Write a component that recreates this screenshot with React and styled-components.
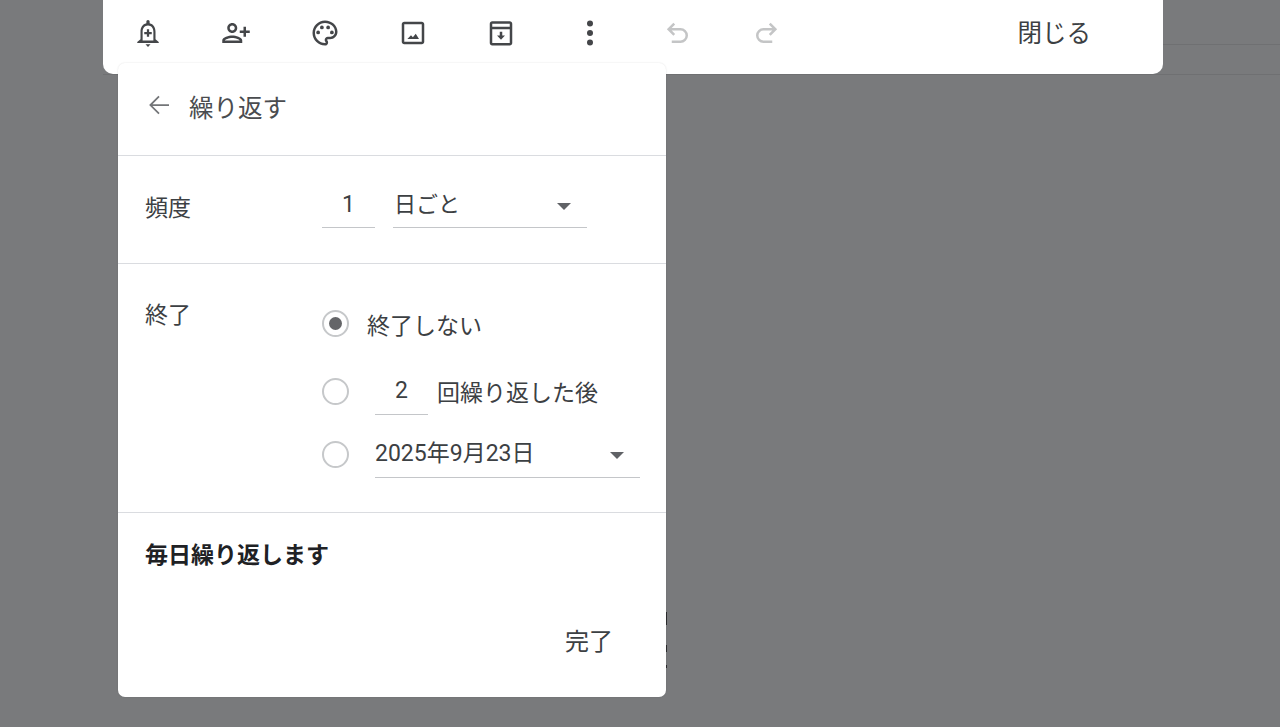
import React from 'react'
import styled, { createGlobalStyle } from 'styled-components'

const Global = createGlobalStyle`
  html, body { margin: 0; padding: 0; height: 100%; }
  body {
    background: #797a7c;
    font-family: Roboto, "Noto Sans CJK JP", sans-serif;
    color: #3c4043;
    overflow: hidden;
  }
`

// faint lines of the page behind the scrim, and the bits of text that peek out past the popup
const Page = styled.div`
  position: relative;
  width: 1280px;
  height: 727px;
  padding-left: 103px;
  box-sizing: border-box;
  background-color: #797a7c;
  background-repeat: no-repeat;
  background-image:
    linear-gradient(#6f7072, #6f7072),
    linear-gradient(#6f7072, #6f7072),
    linear-gradient(#2c2c2e, #2c2c2e),
    linear-gradient(#2c2c2e, #2c2c2e),
    linear-gradient(#2c2c2e, #2c2c2e);
  background-size: 117px 1px, 1177px 1px, 1px 13px, 1px 7px, 1px 3px;
  background-position: 1163px 44px, 103px 74px, 666px 612px, 666px 645px, 666px 665px;
`

const Editor = styled.div`
  width: 1060px;
  height: 74px;
  background: #fff;
  border-radius: 0 0 10px 10px;
  display: flex;
  align-items: flex-start;
  box-sizing: border-box;
  padding: 18px 0 0 1px;
`

const Tools = styled.div`
  display: flex;
  flex: 1;
`

const Tool = styled.div`
  width: 88.3px;
  height: 30px;
  display: flex;
  align-items: center;
  justify-content: center;
  color: ${(props) => (props.off ? '#c4c5c6' : '#444649')};
`

const CloseBtn = styled.div`
  font-size: 24.5px;
  line-height: 30px;
  color: #3c4043;
  margin: 1px 72px 0 0;
`

const Popup = styled.div`
  position: absolute;
  left: 118px;
  top: 63px;
  width: 548px;
  height: 634px;
  background: #fff;
  border-radius: 7px;
  box-shadow: 0 0 2px rgba(0, 0, 0, 0.12);
  display: flex;
  flex-direction: column;
`

const Header = styled.div`
  height: 87px;
  border-bottom: 1px solid #dadce0;
  display: flex;
  align-items: center;
  padding: 0 0 5px 26px;
  font-size: 24.5px;
  gap: 15px;
  color: #4a4c4f;
`

const BackIcon = styled.span`
  display: flex;
  color: #737578;
  margin-top: -4px;
`

const Section = styled.div`
  display: flex;
  border-bottom: 1px solid #dadce0;
  height: ${(props) => props.h}px;
  padding: ${(props) => props.pad}px 26px 0 27px;
  box-sizing: border-box;
`

const Label = styled.div`
  width: 177px;
  flex-shrink: 0;
  font-size: 23px;
  line-height: 32px;
  margin-top: ${(props) => props.top}px;
`

const Field = styled.div`
  height: ${(props) => (props.tall ? 48 : 39)}px;
  border-bottom: 1px solid #c4c6c9;
  box-sizing: border-box;
  font-size: ${(props) => props.fs || 23}px;
  line-height: 32px;
  display: flex;
  align-items: ${(props) => (props.tall ? 'center' : 'flex-start')};
  justify-content: ${(props) => (props.num ? 'center' : 'space-between')};
  width: ${(props) => props.w}px;
  flex-shrink: 0;
  margin-right: ${(props) => props.mr || 0}px;
  padding: 0 ${(props) => (props.num ? 0 : 16)}px 0 ${(props) => (props.num ? 0 : props.pl || 0)}px;
`

const Caret = styled.span`
  width: 0;
  height: 0;
  margin-top: ${(props) => props.top}px;
  border-left: 7px solid transparent;
  border-right: 7px solid transparent;
  border-top: 7px solid #606266;
`

const Options = styled.div`
  display: flex;
  flex-direction: column;
`

const Option = styled.div`
  display: flex;
  align-items: center;
  height: ${(props) => props.h}px;
  font-size: 23px;
`

const Radio = styled.span`
  width: 27px;
  height: 27px;
  border: 2px solid #c6c8ca;
  border-radius: 50%;
  box-sizing: border-box;
  margin-right: ${(props) => props.mr}px;
  display: flex;
  align-items: center;
  justify-content: center;
  flex-shrink: 0;
  &::after {
    content: '';
    display: ${(props) => (props.on ? 'block' : 'none')};
    width: 13px;
    height: 13px;
    border-radius: 50%;
    background: #646568;
  }
`

const Summary = styled.div`
  padding: 26px 0 0 27px;
  font-size: 23px;
  line-height: 34px;
  font-weight: 700;
  color: #202124;
`

const Done = styled.div`
  margin: 52px 53px 0 auto;
  font-size: 24px;
  line-height: 34px;
  color: #3c4043;
`

const Icon = ({ children, size = 30, flip }) => (
  <svg width={size} height={size} viewBox="0 0 24 24" fill="currentColor" style={flip ? { transform: 'scaleX(-1)' } : undefined}>
    {children}
  </svg>
)

const undoPath = 'M9 4.5 4.5 9 9 13.5M4.5 9H14a5 5 0 0 1 0 10H7'

export default function App() {
  return (
    <Page>
      <Global />
      <Editor>
        <Tools>
          <Tool>
            <Icon>
              <path d="M12 1.6c-.8 0-1.3.6-1.3 1.4v1.2C7.6 4.9 6 7.6 6 11v6l-2.6 2.2V20h17.2v-.8L18 17v-6c0-3.4-1.6-6.1-4.7-6.8V3c0-.8-.5-1.4-1.3-1.4zm0 4.3c2.7 0 4.3 2.2 4.3 5.1v7H7.7V11c0-2.9 1.6-5.1 4.3-5.1z" />
              <path d="M10 21h4l-2 2.2z" />
              <path d="M11.1 9h1.8v2.1H15v1.8h-2.1V15h-1.8v-2.1H9v-1.8h2.1z" />
            </Icon>
          </Tool>
          <Tool>
            <Icon flip><path d="M15 12c2.21 0 4-1.79 4-4s-1.79-4-4-4-4 1.79-4 4 1.79 4 4 4zm0-6c1.1 0 2 .9 2 2s-.9 2-2 2-2-.9-2-2 .9-2 2-2zm0 8c-2.67 0-8 1.34-8 4v2h16v-2c0-2.66-5.33-4-8-4zm-6 4c.22-.72 3.31-2 6-2 2.7 0 5.8 1.29 6 2H9zm-3-3v-3h3v-2H6V7H4v3H1v2h3v3h2z" /></Icon>
          </Tool>
          <Tool>
            <Icon>
              <path d="M12 22C6.49 22 2 17.51 2 12S6.49 2 12 2s10 4.04 10 9c0 3.31-2.69 6-6 6h-1.77c-.28 0-.5.22-.5.5 0 .12.05.23.13.33.41.47.64 1.06.64 1.67 0 1.38-1.12 2.5-2.5 2.5zm0-18c-4.41 0-8 3.59-8 8s3.59 8 8 8c.28 0 .5-.22.5-.5 0-.16-.08-.28-.14-.35-.41-.46-.63-1.05-.63-1.65 0-1.38 1.12-2.5 2.5-2.5H16c2.21 0 4-1.79 4-4 0-3.86-3.59-7-8-7z" />
              <circle cx="6.5" cy="11.5" r="1.5" />
              <circle cx="9.5" cy="7.5" r="1.5" />
              <circle cx="14.5" cy="7.5" r="1.5" />
              <circle cx="17.5" cy="11.5" r="1.5" />
            </Icon>
          </Tool>
          <Tool>
            <Icon>
              <path d="M19 3H5c-1.1 0-2 .9-2 2v14c0 1.1.9 2 2 2h14c1.1 0 2-.9 2-2V5c0-1.1-.9-2-2-2zm0 16H5V5h14v14z" />
              <path d="M14.2 12.5l-2.3 2.9-1.5-1.7-2.9 3.1h9.300z" />
            </Icon>
          </Tool>
          <Tool>
            <Icon>
              <path d="M19 2.5H5c-1.1 0-2 .9-2 2V20c0 1.1.9 2 2 2h14c1.1 0 2-.9 2-2V4.500c0-1.1-.9-2-2-2zM5 4.500h14V7H5V4.500zM5 20V9h14v11H5z" />
              <path d="M13 11h-2v3H8.800l3.200 3.300 3.200-3.300H13z" />
            </Icon>
          </Tool>
          <Tool>
            <Icon>
              <circle cx="12" cy="4.400" r="2.400" />
              <circle cx="12" cy="12" r="2.400" />
              <circle cx="12" cy="19.600" r="2.400" />
            </Icon>
          </Tool>
          <Tool off>
            <Icon><path d={undoPath} fill="none" stroke="currentColor" strokeWidth="2" /></Icon>
          </Tool>
          <Tool off>
            <Icon flip><path d={undoPath} fill="none" stroke="currentColor" strokeWidth="2" /></Icon>
          </Tool>
        </Tools>
        <CloseBtn>閉じる</CloseBtn>
      </Editor>

      <Popup>
        <Header>
          <BackIcon>
            <Icon><path d="M20 11.300H6.800l5.700-5.700-1-1L4.100 12l7.400 7.400 1-1-5.700-5.700H20z" /></Icon>
          </BackIcon>
          <span>繰り返す</span>
        </Header>

        <Section h={108} pad={33}>
          <Label top={4}>頻度</Label>
          <Field num w={53} mr={18}>1</Field>
          <Field w={194} pl={1} fs={22}>日ごと<Caret top={14} /></Field>
        </Section>

        <Section h={249} pad={35}>
          <Label top={1}>終了</Label>
          <Options>
            <Option h={49}><Radio on mr={18} />終了しない</Option>
            <Option h={86}>
              <Radio mr={26} />
              <Field tall num w={53} mr={9}>2</Field>
              回繰り返した後
            </Option>
            <Option h={40}>
              <Radio mr={26} />
              <Field tall w={265}>2025年9月23日<Caret top={4} /></Field>
            </Option>
          </Options>
        </Section>

        <Summary>毎日繰り返します</Summary>
        <Done>完了</Done>
      </Popup>
    </Page>
  )
}
